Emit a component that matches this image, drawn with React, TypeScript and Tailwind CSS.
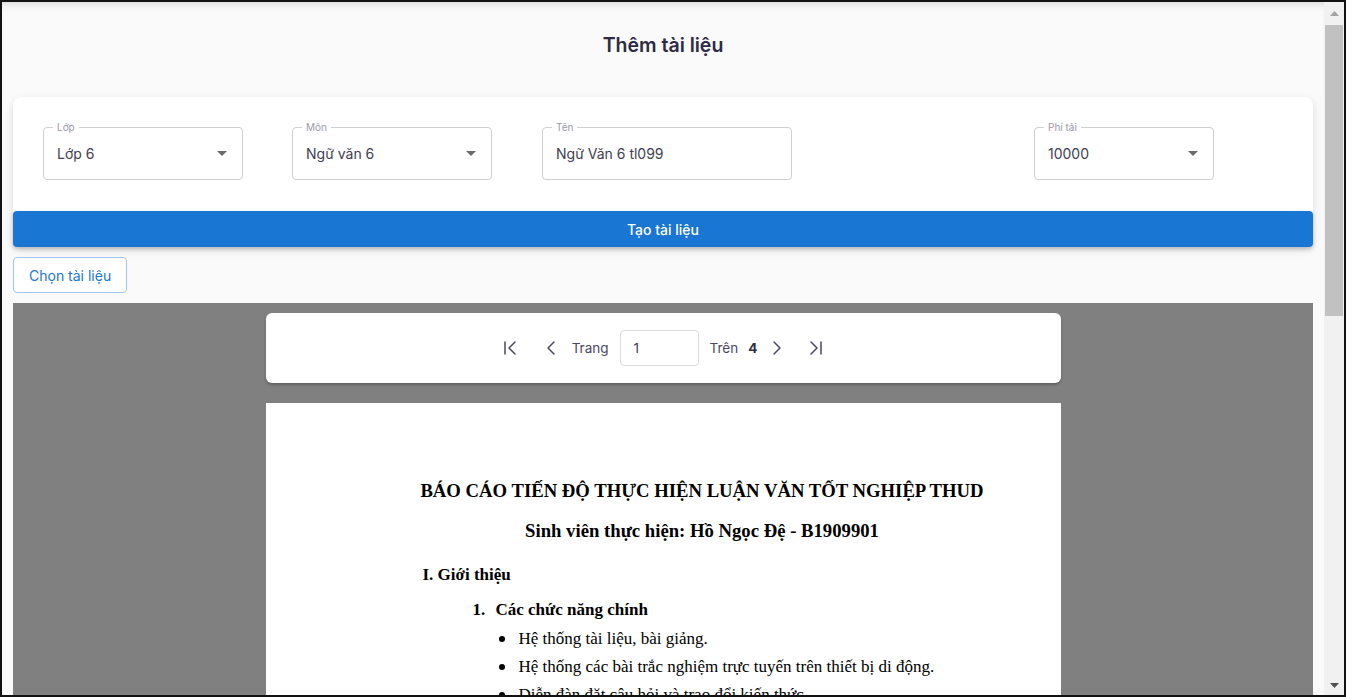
import { ChevronLeft, ChevronRight, ChevronFirst, ChevronLast } from "lucide-react";

function Caret() {
  return (
    <svg width="10" height="5" viewBox="0 0 10 5" className="shrink-0">
      <path d="M0 0 L10 0 L5 5 Z" fill="#6b6b6b" />
    </svg>
  );
}

function Field({
  label,
  value,
  width,
  select = true,
  className = "",
}: {
  label: string;
  value: string;
  width: string;
  select?: boolean;
  className?: string;
}) {
  return (
    <div className={`relative h-[53px] ${width} ${className}`}>
      <div className="absolute inset-0 rounded-[4px] border border-[#cfcfd4]" />
      <span className="absolute -top-[7px] left-[10px] bg-white px-[4px] text-[10px] leading-[14px] text-[#9a9aa6]">
        {label}
      </span>
      <div className="relative flex h-full items-center justify-between pl-[14px] pr-[16px]">
        <span className="text-[14px] text-[#3f3d52]">{value}</span>
        {select && <Caret />}
      </div>
    </div>
  );
}

export default function App() {
  return (
    <div
      className="h-[697px] w-[1346px] overflow-hidden border-2 border-[#121212] bg-[#fafafa]"
      style={{ fontFamily: "Inter, 'Noto Sans', sans-serif" }}
    >
      <div className="flex h-full">
        <main className="flex-1 overflow-hidden px-[11px]">
          <header className="-mx-[11px] flex h-[95px] items-start justify-center pt-[29px] shadow-[inset_0_8px_8px_-6px_rgba(0,0,0,0.14)]">
            <h1 className="text-[19.5px] font-semibold leading-[28px] text-[#2d2b45]">Thêm tài liệu</h1>
          </header>

          <section className="rounded-lg bg-white shadow-[0_3px_8px_rgba(0,0,0,0.12)]">
            <div className="flex px-[30px] pt-[30px] pb-[31px]">
              <Field label="Lớp" value="Lớp 6" width="w-[200px]" />
              <Field label="Môn" value="Ngữ văn 6" width="w-[200px]" className="ml-[49px]" />
              <Field label="Tên" value="Ngữ Văn 6 tl099" width="w-[250px]" select={false} className="ml-[50px]" />
              <Field label="Phí tải" value="10000" width="w-[180px]" className="ml-[242px]" />
            </div>
            <button className="flex h-[36px] w-full items-center justify-center rounded-[4px] bg-[#1976d2] text-[14px] font-medium text-white shadow-[0_2px_4px_rgba(0,0,0,0.2)]">
              Tạo tài liệu
            </button>
          </section>

          <button className="mt-[10px] h-[36px] rounded-[4px] border border-[#a3c5ea] bg-white px-[15px] text-[14px] text-[#1976d2]">
            Chọn tài liệu
          </button>

          <section className="mt-[10px] flex h-[500px] flex-col items-center bg-[#808080] pt-[10px]">
            <div className="flex h-[70px] w-[795px] items-center justify-center rounded-[6px] bg-white text-[13.5px] text-[#4a4862] shadow-[0_2px_3px_rgba(0,0,0,0.25)]">
              <ChevronFirst size={24} strokeWidth={1.5} className="text-[#4a4862]" />
              <ChevronLeft size={24} strokeWidth={1.5} className="ml-[17px] text-[#4a4862]" />
              <span className="ml-[9px]">Trang</span>
              <div className="ml-[11px] flex h-[36px] w-[79px] items-center rounded-[4px] border border-[#dcdce0] pl-[13px] text-[#3f3d52]">
                1
              </div>
              <span className="ml-[11px]">Trên</span>
              <span className="ml-[10px] font-bold text-[#2d2b45]">4</span>
              <ChevronRight size={24} strokeWidth={1.5} className="ml-[8px] text-[#4a4862]" />
              <ChevronLast size={24} strokeWidth={1.5} className="ml-[15px] text-[#4a4862]" />
            </div>

            <div
              className="mt-[20px] w-[795px] flex-1 bg-white pl-[157px] pr-[79px] pt-[76px] text-black"
              style={{ fontFamily: "'Liberation Serif', 'Times New Roman', serif" }}
            >
              <p className="-mx-[60px] whitespace-nowrap text-center text-[18.7px] font-bold leading-[24px]">
                BÁO CÁO TIẾN ĐỘ THỰC HIỆN LUẬN VĂN TỐT NGHIỆP THUD
              </p>
              <p className="mt-[16px] whitespace-nowrap text-center text-[18.7px] font-bold leading-[24px]">
                Sinh viên thực hiện: Hồ Ngọc Đệ - B1909901
              </p>
              <p className="mt-[21px] text-[17px] font-bold leading-[22px]">I. Giới thiệu</p>
              <p className="mt-[13px] flex text-[17px] font-bold leading-[22px]">
                <span className="ml-[50px] w-[23px]">1.</span>
                <span>Các chức năng chính</span>
              </p>
              <ul className="mt-[4px] text-[17px] leading-[28px]">
                {[
                  "Hệ thống tài liệu, bài giảng.",
                  "Hệ thống các bài trắc nghiệm trực tuyến trên thiết bị di động.",
                  "Diễn đàn đặt câu hỏi và trao đổi kiến thức.",
                ].map((t) => (
                  <li key={t} className="flex items-center">
                    <span className="ml-[76px] mr-[14px] h-[6px] w-[6px] rounded-full bg-black" />
                    <span>{t}</span>
                  </li>
                ))}
              </ul>
            </div>
          </section>
        </main>

        <aside className="flex w-[20px] flex-col bg-[#f1f1f1]">
          <div className="flex h-[23px] items-center justify-center">
            <svg width="9" height="5" viewBox="0 0 9 5">
              <path d="M0 5 L9 5 L4.5 0 Z" fill="#a3a3a3" />
            </svg>
          </div>
          <div className="mx-[1px] h-[291px] bg-[#c1c1c1]" />
          <div className="flex-1" />
          <div className="flex h-[20px] items-center justify-center">
            <svg width="9" height="5" viewBox="0 0 9 5">
              <path d="M0 0 L9 0 L4.5 5 Z" fill="#505050" />
            </svg>
          </div>
        </aside>
      </div>
    </div>
  );
}
